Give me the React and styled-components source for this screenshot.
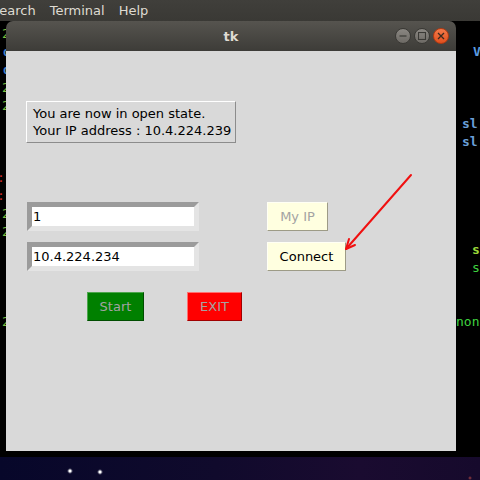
import React from "react";
import styled, { createGlobalStyle } from "styled-components";

const GlobalStyle = createGlobalStyle`
  html, body {
    margin: 0;
    padding: 0;
    background: #000;
    overflow: hidden;
  }
`;

const Screen = styled.div`
  position: relative;
  width: 480px;
  height: 480px;
  display: flex;
  flex-direction: column;
  overflow: hidden;
  background: #000;
`;

const Terminal = styled.div`
  height: 457px;
  flex-shrink: 0;
  display: flex;
  flex-direction: column;
  background: #000;
`;

const MenuBar = styled.div`
  height: 21px;
  display: flex;
  align-items: center;
  gap: 14px;
  background: linear-gradient(#403f3b, #3a3935);
  color: #dfdbd2;
  font-family: "DejaVu Sans", sans-serif;
  font-size: 13px;
  white-space: nowrap;
`;

const MenuItem = styled.span`
  margin-left: ${(p) => p.$shift || 0}px;
`;

const TermBody = styled.div`
  padding-top: 4px;
  font-family: "DejaVu Sans Mono", monospace;
  font-size: 13px;
  line-height: 18px;
`;

const TermLine = styled.div`
  height: 18px;
  display: grid;
  grid-template-columns: 456px 1fr;
  white-space: pre;
  overflow: hidden;
`;

const LeftCell = styled.span`
  overflow: hidden;
  color: ${(p) => p.$color};
  font-weight: ${(p) => (p.$bold ? 700 : 400)};
  span {
    margin-left: ${(p) => p.$shift || 0}px;
  }
`;

const RightCell = styled.span`
  padding-left: ${(p) => p.$offset || 0}px;
  color: ${(p) => p.$color};
  font-weight: ${(p) => (p.$bold ? 700 : 400)};
`;

const Desktop = styled.div`
  flex: 1;
  background:
    radial-gradient(circle at 70px 14px, #fff 0, #fff 1px, rgba(255,255,255,0.3) 2px, transparent 3px),
    radial-gradient(circle at 100px 15px, #fff 0, #fff 1px, rgba(255,255,255,0.3) 2px, transparent 3px),
    radial-gradient(circle at 470px 21px, #a04040 0, transparent 2px),
    linear-gradient(90deg, #07072a 0%, #100a2c 45%, #1a0b30 75%, #160a2c 100%);
`;

const TkWindow = styled.div`
  position: absolute;
  left: 6px;
  top: 21px;
  width: 450px;
  height: 430px;
  display: flex;
  flex-direction: column;
`;

const TitleBar = styled.div`
  height: 30px;
  flex-shrink: 0;
  position: relative;
  display: flex;
  align-items: center;
  justify-content: flex-end;
  gap: 3px;
  padding-right: 7px;
  border-radius: 7px 7px 0 0;
  background: linear-gradient(#56544f, #3d3c38);
`;

const Title = styled.div`
  position: absolute;
  left: 0;
  right: 0;
  text-align: center;
  color: #dfdbd2;
  font-family: "DejaVu Sans", sans-serif;
  font-weight: 700;
  font-size: 13px;
`;

const WinButton = styled.div`
  width: 16px;
  height: 16px;
  border-radius: 50%;
  display: flex;
  align-items: center;
  justify-content: center;
  box-sizing: border-box;
  border: 1px solid ${(p) => (p.$close ? "#b33a12" : "#3a3935")};
  background: ${(p) =>
    p.$close
      ? "linear-gradient(#f47a4a, #e0501e)"
      : "linear-gradient(#8a8782, #6d6a65)"};
`;

const Body = styled.div`
  flex: 1;
  background: #d9d9d9;
  display: flex;
  flex-direction: column;
  align-items: flex-start;
  padding: 50px 0 0 20px;
  font-family: "DejaVu Sans", sans-serif;
  font-size: 13px;
`;

const StateLabel = styled.div`
  width: 210px;
  height: 42px;
  box-sizing: border-box;
  padding: 3px 0 3px 6px;
  border: 1px solid;
  border-color: #fff #8c8c8c #8c8c8c #fff;
  line-height: 17px;
  color: #000;
  white-space: nowrap;
`;

const FormRow = styled.div`
  display: flex;
  align-items: center;
  gap: 68px;
  margin-left: 1px;
  margin-top: ${(p) => p.$top}px;
`;

const Entry = styled.div`
  width: 172px;
  height: 29px;
  box-sizing: border-box;
  border: 5px solid;
  border-color: #9b9b9b #e4e4e4 #e4e4e4 #9b9b9b;
  background: #fff;
  padding-left: 1px;
  line-height: 19px;
  color: #000;
  white-space: nowrap;
`;

const TkButton = styled.div`
  width: ${(p) => p.$w}px;
  height: 29px;
  box-sizing: border-box;
  border: 1px solid;
  border-color: ${(p) => p.$light} ${(p) => p.$dark} ${(p) => p.$dark} ${(p) => p.$light};
  background: ${(p) => p.$bg};
  color: ${(p) => p.$fg};
  display: flex;
  align-items: center;
  justify-content: center;
`;

const ActionRow = styled.div`
  display: flex;
  gap: 43px;
  margin: 21px 0 0 61px;
`;

const Overlay = styled.svg`
  position: absolute;
  left: 0;
  top: 0;
  pointer-events: none;
`;

const termLines = [
  { left: "2", lc: "#7cc040", ls: 2 },
  { left: "d", lc: "#3f7fc8", lb: true, ls: 3, right: "V", rc: "#5a9be0", ro: 17, rb: true },
  { left: "d", lc: "#3f7fc8", lb: true, ls: 3 },
  { left: "2", lc: "#7cc040", ls: 2 },
  { left: "2", lc: "#7cc040", ls: 2 },
  { right: "sl", rc: "#6a9fd8", ro: 6, rb: true },
  { right: "sl", rc: "#6a9fd8", ro: 6, rb: true },
  {},
  { left: "::", lc: "#d02828", ls: -3 },
  { left: "::", lc: "#d02828", ls: -3 },
  { left: "2", lc: "#7cc040", ls: 2 },
  { left: "2", lc: "#7cc040", ls: 2 },
  { right: "s", rc: "#9ad83a", ro: 16, rb: true },
  { right: "s", rc: "#3fd23f", ro: 16 },
  {},
  {},
  { left: "2", lc: "#7cc040", ls: 2, right: "non", rc: "#3fd23f", ro: 0 },
];

const App = () => (
  <>
    <GlobalStyle />
    <Screen>
      <Terminal>
        <MenuBar>
          <MenuItem $shift={-9}>Search</MenuItem>
          <MenuItem>Terminal</MenuItem>
          <MenuItem>Help</MenuItem>
        </MenuBar>
        <TermBody>
          {termLines.map((l, i) => (
            <TermLine key={i}>
              <LeftCell $color={l.lc} $bold={l.lb} $shift={l.ls}>
                <span>{l.left || ""}</span>
              </LeftCell>
              <RightCell $color={l.rc} $offset={l.ro} $bold={l.rb}>
                {l.right || ""}
              </RightCell>
            </TermLine>
          ))}
        </TermBody>
      </Terminal>
      <Desktop />

      <TkWindow>
        <TitleBar>
          <Title>tk</Title>
          <WinButton>
            <svg width="8" height="8" viewBox="0 0 8 8">
              <path d="M0.5 4h7" stroke="#3a3935" strokeWidth="1.2" />
            </svg>
          </WinButton>
          <WinButton>
            <svg width="8" height="8" viewBox="0 0 8 8">
              <rect x="0.5" y="0.5" width="7" height="7" fill="none" stroke="#3a3935" strokeWidth="1.1" />
            </svg>
          </WinButton>
          <WinButton $close>
            <svg width="8" height="8" viewBox="0 0 8 8">
              <path d="M1 1l6 6M7 1l-6 6" stroke="#3a2a20" strokeWidth="1.3" />
            </svg>
          </WinButton>
        </TitleBar>
        <Body>
          <StateLabel>
            You are now in open state.
            <br />
            Your IP address : 10.4.224.239
          </StateLabel>
          <FormRow $top={59}>
            <Entry>1</Entry>
            <TkButton $w={61} $bg="#ffffe0" $fg="#a3a3a3" $light="#fffff4" $dark="#9d9b86">
              My IP
            </TkButton>
          </FormRow>
          <FormRow $top={11}>
            <Entry>10.4.224.234</Entry>
            <TkButton $w={79} $bg="#ffffe0" $fg="#000" $light="#fffff4" $dark="#9d9b86">
              Connect
            </TkButton>
          </FormRow>
          <ActionRow>
            <TkButton $w={57} $bg="#008000" $fg="#a3a3a3" $light="#4da64d" $dark="#004d00">
              Start
            </TkButton>
            <TkButton $w={55} $bg="#ff0000" $fg="#a3a3a3" $light="#ff7070" $dark="#a00000">
              EXIT
            </TkButton>
          </ActionRow>
        </Body>
      </TkWindow>

      <Overlay width="480" height="480" viewBox="0 0 480 480">
        <g stroke="#f01010" strokeWidth="2" strokeLinecap="round" fill="none">
          <path d="M411 175L346 249" />
          <path d="M346 249L349 239M346 249L355 245" />
        </g>
      </Overlay>
    </Screen>
  </>
);

export default App;
